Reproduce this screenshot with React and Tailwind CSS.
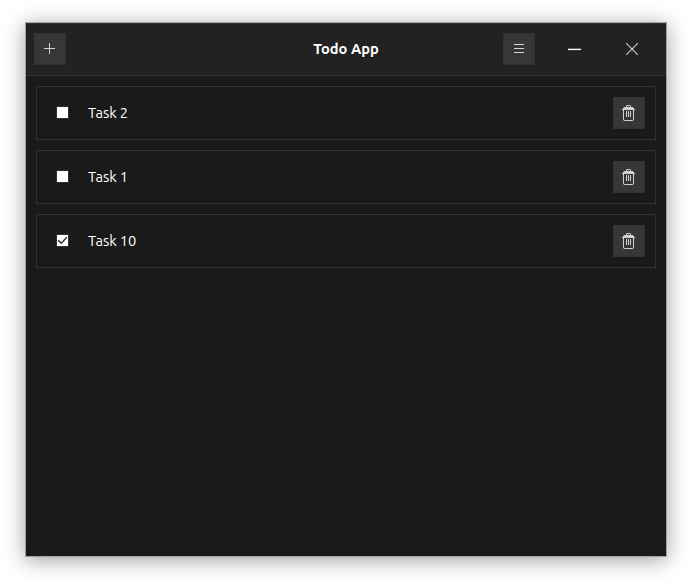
import React, { useState } from "react";

function IconButton({ label, onClick, children }) {
  return (
    <button
      aria-label={label}
      onClick={onClick}
      className="flex size-8 shrink-0 items-center justify-center border border-[#323232] bg-[#373737]"
    >
      {children}
    </button>
  );
}

function PlusIcon() {
  return (
    <svg width="30" height="30" viewBox="0 0 30 30" fill="#d3d3d3" shapeRendering="crispEdges">
      <rect x="9" y="14" width="11" height="1" />
      <rect x="14" y="9" width="1" height="11" />
    </svg>
  );
}

function MenuIcon() {
  return (
    <svg width="30" height="30" viewBox="0 0 30 30" fill="#d3d3d3" shapeRendering="crispEdges">
      <rect x="10" y="10" width="10" height="1" />
      <rect x="10" y="14" width="10" height="1" />
      <rect x="10" y="18" width="10" height="1" />
    </svg>
  );
}

function TrashIcon() {
  return (
    <svg width="30" height="30" viewBox="0 0 30 30" fill="none" stroke="#d0d0d0">
      <path d="M12.5 9.5V8q0-.5.5-.5h3q.5 0 .5.5v1.5" />
      <path d="M10 9h9v.6l1 .4v1h1v1H8v-1h1v-1l1-.4z" fill="#d0d0d0" stroke="none" />
      <path d="M9.5 12v9.5q0 1 1 1h8q1 0 1-1V12" />
      <path d="M12.5 13v6M14.5 13v6M16.5 13v6" />
    </svg>
  );
}

function Checkbox({ checked, onClick }) {
  return (
    <button
      role="checkbox"
      aria-checked={checked}
      onClick={onClick}
      className="mb-px size-[13px] shrink-0 border border-[#303030] bg-white"
    >
      {checked && (
        <svg width="11" height="11" viewBox="0 0 11 11" fill="none" stroke="#373737" strokeWidth="1.5">
          <path d="M1.3 5.4 4.3 8.3 9.9 2.3" />
        </svg>
      )}
    </button>
  );
}

function Task({ task, onToggle, onDelete }) {
  return (
    <li className="flex h-[54px] items-center border border-[#323232] pr-2.5 pl-[19px]">
      <Checkbox checked={task.done} onClick={onToggle} />
      <span className="ml-[19px] flex-1 text-[14.667px] leading-5 tracking-[-0.08px] text-white">{task.title}</span>
      <IconButton label="Delete" onClick={onDelete}>
        <TrashIcon />
      </IconButton>
    </li>
  );
}

export default function App() {
  const [tasks, setTasks] = useState([
    { id: 2, title: "Task 2", done: false },
    { id: 1, title: "Task 1", done: false },
    { id: 10, title: "Task 10", done: true },
  ]);
  const toggle = (id) => setTasks(tasks.map((t) => (t.id === id ? { ...t, done: !t.done } : t)));
  const remove = (id) => setTasks(tasks.filter((t) => t.id !== id));

  return (
    <div className="h-[585px] w-[692px] overflow-hidden bg-white pt-[22px] pl-[25px] font-['Ubuntu','Noto_Sans',sans-serif]">
      <main className="h-[535px] w-[642px] border border-[#a3a1a1] bg-[#1a1a1a] shadow-[0_3px_20px_rgba(0,0,0,0.38)]">
        <header className="grid h-[53px] grid-cols-[1fr_auto_1fr] items-center border-t border-b border-t-[#303030] border-b-[#323232] bg-[#222222] pb-px pl-2">
          <div className="flex">
            <IconButton label="Add task">
              <PlusIcon />
            </IconButton>
          </div>
          <h1 className="pr-2 text-[14.667px] leading-5 font-bold text-white">Todo App</h1>
          <div className="flex items-center justify-end pr-7">
            <IconButton label="Menu">
              <MenuIcon />
            </IconButton>
            <button aria-label="Minimize" className="ml-8">
              <svg width="15" height="16" viewBox="0 0 15 16">
                <path d="M1 8.4h13" stroke="#fff" strokeWidth="1.4" />
              </svg>
            </button>
            <button aria-label="Close" className="ml-10">
              <svg width="16" height="16" viewBox="0 0 16 16" stroke="#fff" strokeOpacity="0.75" strokeWidth="1.15">
                <path d="M4.2 2.2 15.8 13.8" />
                <path d="M15.8 2.2 4.2 13.8" />
              </svg>
            </button>
          </div>
        </header>
        <ul className="flex flex-col gap-2.5 p-2.5">
          {tasks.map((t) => (
            <Task key={t.id} task={t} onToggle={() => toggle(t.id)} onDelete={() => remove(t.id)} />
          ))}
        </ul>
      </main>
    </div>
  );
}
